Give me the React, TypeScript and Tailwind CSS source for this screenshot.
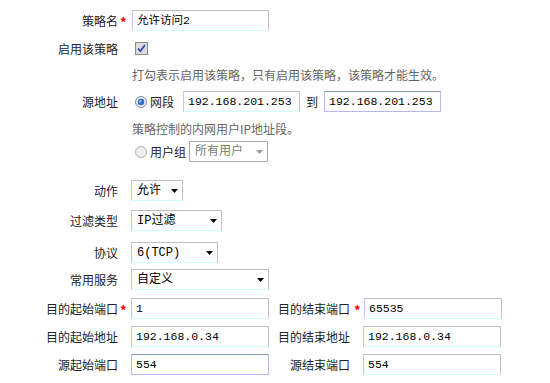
import React from 'react';

const sans = "font-['Noto_Sans_CJK_SC','Liberation_Sans',sans-serif]";
const mono = "font-['Liberation_Mono','Noto_Sans_CJK_SC',monospace]";

const Star: React.FC = () => <span className="text-[#ff0000] font-bold text-[13px] leading-none">*</span>;

const Input: React.FC<{ value: string; w: string; focus?: boolean }> = ({ value, w, focus }) => (
  <div
    className={
      (focus
        ? 'border border-[#b8b8f0] border-t-[#7f9db9] '
        : 'border border-t-[#c0c0c0] border-r-[#c0c0c0] border-b-[#ccffff] border-l-[#c4c4fc] ') +
      `${w} h-[21px] flex items-center pl-[4px] bg-white text-[11.5px] text-black ${mono}`
    }
  >
    {value}
  </div>
);

const Arrow: React.FC<{ grey?: boolean }> = ({ grey }) => (
  <svg width="7" height="4" viewBox="0 0 7 4" className={grey ? 'text-[#9a9a9a]' : 'text-black'}>
    <path d="M0 0h7L3.5 4z" fill="currentColor" />
  </svg>
);

const Select: React.FC<{ value: string; w: string; disabled?: boolean }> = ({ value, w, disabled }) => (
  <div
    className={
      (disabled
        ? 'border border-[#a8a8a8] text-[#7a7a7a] rounded-[1px] '
        : 'border border-t-[#c0c0c0] border-r-[#c0c0c0] border-b-[#ccffff] border-l-[#c4c4fc] text-black ') +
      `${w} h-[21px] flex items-center justify-between pl-[5px] pr-[4px] bg-white text-[12px] ${mono}`
    }
  >
    <span>{value}</span>
    <Arrow grey={disabled} />
  </div>
);

const Radio: React.FC<{ checked?: boolean }> = ({ checked }) => (
  <svg width="12" height="12" viewBox="0 0 12 12" className="mr-[3px]">
    <circle cx="6" cy="6" r="5.5" fill={checked ? '#e8ecf4' : '#f0f0f0'} stroke={checked ? '#7a8aa8' : '#b0b0b0'} />
    {checked && <circle cx="6" cy="6" r="3.3" fill="#2f6fc8" />}
    {checked && <circle cx="5.2" cy="5.2" r="1.2" fill="#9cc4f4" />}
  </svg>
);

const Label: React.FC<{ children: React.ReactNode; w?: string }> = ({ children, w = 'w-[118px]' }) => (
  <div className={`${w} text-right shrink-0`}>{children}</div>
);

const App: React.FC = () => {
  return (
    <div className={`w-[550px] h-[383px] bg-white overflow-hidden text-[12px] text-[#222] ${sans} flex flex-col`}>
      {/* 策略名 */}
      <div className="mt-[10px] h-[21px] flex items-center">
        <Label>策略名</Label>
        <div className="w-[14px] pl-[2px] pt-[3px]"><Star /></div>
        <Input value="允许访问2" w="w-[137px]" />
      </div>

      {/* 启用 */}
      <div className="mt-[7px] h-[21px] flex items-center">
        <Label>启用该策略</Label>
        <div className="w-[14px]" />
        <div className="ml-[3px] w-[13px] h-[13px] border border-[#8a8a8a] bg-[#dcdcdc] flex items-center justify-center">
          <svg width="9" height="9" viewBox="0 0 9 9">
            <path d="M1 4.5l2.3 2.6L8 1" stroke="#2a48b8" strokeWidth="1.7" fill="none" />
          </svg>
        </div>
      </div>

      <div className="mt-[5px] h-[21px] flex items-center pl-[132px] text-[#666]">
        打勾表示启用该策略，只有启用该策略，该策略才能生效。
      </div>

      {/* 源地址 */}
      <div className="mt-[6px] h-[21px] flex items-center">
        <Label>源地址</Label>
        <div className="w-[14px]" />
        <div className="ml-[3px] flex items-center">
          <Radio checked />
          <span>网段</span>
        </div>
        <div className="ml-[9px]"><Input value="192.168.201.253" w="w-[117px]" /></div>
        <span className="mx-[6px]">到</span>
        <Input value="192.168.201.253" w="w-[117px]" focus />
      </div>

      <div className="mt-[6px] h-[21px] flex items-center pl-[132px] text-[#666]">
        策略控制的内网用户IP地址段。
      </div>

      <div className="mt-[2px] h-[21px] flex items-center pl-[135px]">
        <Radio />
        <span>用户组</span>
        <div className="ml-[3px]"><Select value="所有用户" w="w-[79px]" disabled /></div>
      </div>

      {/* 动作 */}
      <div className="mt-[18px] h-[21px] flex items-center">
        <Label>动作</Label>
        <div className="w-[13px]" />
        <Select value="允许" w="w-[52px]" />
      </div>

      <div className="mt-[9px] h-[21px] flex items-center">
        <Label>过滤类型</Label>
        <div className="w-[13px]" />
        <Select value="IP过滤" w="w-[91px]" />
      </div>

      <div className="mt-[11px] h-[21px] flex items-center">
        <Label>协议</Label>
        <div className="w-[13px]" />
        <Select value="6(TCP)" w="w-[87px]" />
      </div>

      <div className="mt-[6px] h-[21px] flex items-center">
        <Label>常用服务</Label>
        <div className="w-[13px]" />
        <Select value="自定义" w="w-[138px]" />
      </div>

      {/* 端口 / 地址 */}
      <div className="mt-[8px] h-[21px] flex items-center">
        <Label>目的起始端口</Label>
        <div className="w-[13px] pl-[2px] pt-[3px]"><Star /></div>
        <Input value="1" w="w-[138px]" />
        <Label w="w-[81px]">目的结束端口</Label>
        <div className="w-[14px] pl-[4px] pt-[3px]"><Star /></div>
        <Input value="65535" w="w-[138px]" />
      </div>

      <div className="mt-[7px] h-[21px] flex items-center">
        <Label>目的起始地址</Label>
        <div className="w-[13px]" />
        <Input value="192.168.0.34" w="w-[138px]" />
        <Label w="w-[81px]">目的结束地址</Label>
        <div className="w-[13px]" />
        <Input value="192.168.0.34" w="w-[138px]" />
      </div>

      <div className="mt-[7px] h-[21px] flex items-center">
        <Label>源起始端口</Label>
        <div className="w-[13px]" />
        <Input value="554" w="w-[138px]" focus />
        <Label w="w-[81px]">源结束端口</Label>
        <div className="w-[13px]" />
        <Input value="554" w="w-[138px]" />
      </div>
    </div>
  );
};

export default App;
